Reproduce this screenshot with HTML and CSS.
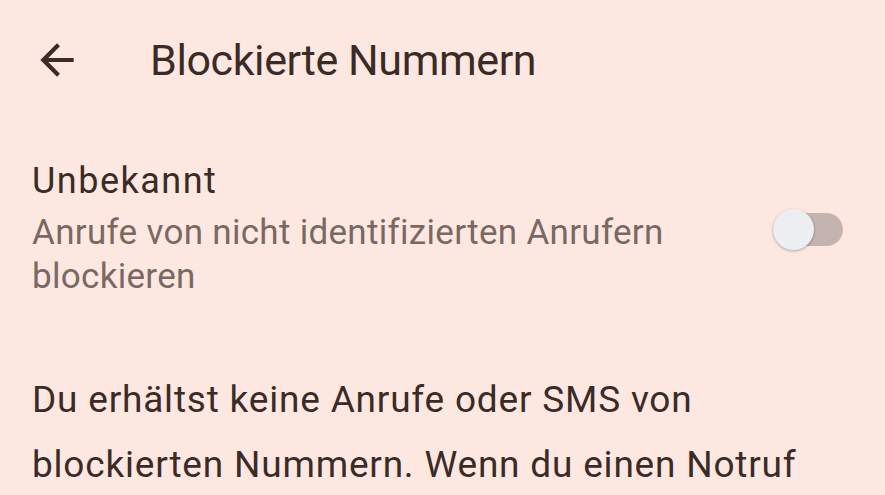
FILE: index.html
```html
<!DOCTYPE html>
<html lang="de">
<head>
<meta charset="utf-8">
<link rel="stylesheet" href="styles.css">
</head>
<body>
<div class="screen">
  <header class="appbar">
    <svg class="back" viewBox="0 0 24 24" width="50" height="50"><path d="M20 11H7.83l5.59-5.59L12 4l-8 8 8 8 1.41-1.41L7.83 13H20v-2z" fill="#3b2b27"/></svg>
    <h1 class="title">Blockierte Nummern</h1>
  </header>
  <section class="setting">
    <div class="setting-text">
      <div class="setting-title">Unbekannt</div>
      <div class="setting-sub">Anrufe von nicht identifizierten Anrufern blockieren</div>
    </div>
    <div class="switch"><div class="track"></div><div class="thumb"></div></div>
  </section>
  <p class="info">Du erhältst keine Anrufe oder SMS von blockierten Nummern. Wenn du einen Notruf</p>
</div>
</body>
</html>
```
FILE: styles.css
```css
html, body { margin: 0; padding: 0; }
body { background: #fde8e1; font-family: Roboto, "Noto Sans", sans-serif; color: #3b2b27; overflow: hidden; }
.screen { width: 885px; height: 495px; overflow: hidden; }
.appbar { display: flex; align-items: center; height: 50px; padding: 35px 0 0 32px; }
.back { flex: none; }
.title { margin: 0 0 0 68px; font-weight: 400; font-size: 43px; line-height: 50px; letter-spacing: -0.4px; white-space: nowrap; }
.setting { display: flex; align-items: center; padding: 74px 42px 0 32px; }
.setting-text { flex: 1; }
.setting-title { font-size: 36px; line-height: 44px; letter-spacing: 1.5px; margin-bottom: 8px; }
.setting-sub { font-size: 35px; line-height: 44px; letter-spacing: 0.3px; color: #7a6863; width: 690px; }
.switch { position: relative; width: 70px; height: 41px; flex: none; }
.track { position: absolute; left: 7px; top: 4px; width: 63px; height: 33px; border-radius: 17px; background: #c4b3ae; }
.thumb { position: absolute; left: 0; top: 0; width: 41px; height: 41px; border-radius: 50%; background: #eceff1; box-shadow: 0 1px 3px rgba(0,0,0,0.3); }
.info { margin: 68px 0 0 32px; font-size: 37px; line-height: 65px; letter-spacing: 0.8px; width: 830px; }
```
